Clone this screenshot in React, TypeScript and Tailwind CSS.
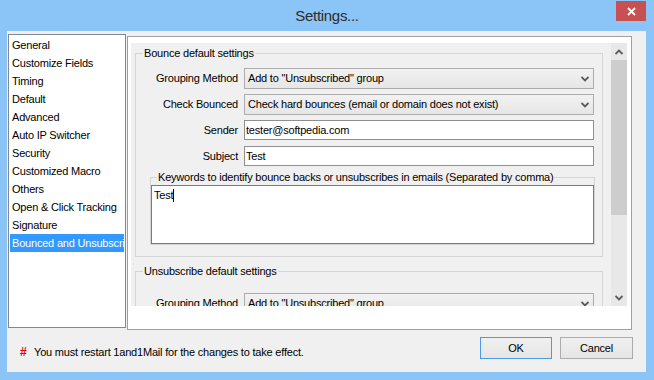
import React from "react";

const items = [
  "General",
  "Customize Fields",
  "Timing",
  "Default",
  "Advanced",
  "Auto IP Switcher",
  "Security",
  "Customized Macro",
  "Others",
  "Open & Click Tracking",
  "Signature",
  "Bounced and Unsubscribe",
];

function Chevron({ up = false }: { up?: boolean }) {
  return (
    <svg width="8" height="6" viewBox="0 0 8 6" className="block">
      <polyline
        points={up ? "0.5,5 4,1.5 7.5,5" : "0.5,1 4,4.5 7.5,1"}
        fill="none"
        stroke="#5a5a5a"
        strokeWidth="1.8"
      />
    </svg>
  );
}

function Select({ text }: { text: string }) {
  return (
    <div className="h-[21px] border border-[#acacac] bg-gradient-to-b from-[#f2f2f2] to-[#e6e6e6] flex items-center justify-between pl-[3px] pr-[4px]">
      <span className="whitespace-nowrap">{text}</span>
      <Chevron />
    </div>
  );
}

function Input({ text }: { text: string }) {
  return (
    <div className="h-[20px] border border-[#8f8f8f] bg-white flex items-center pl-[1px]">
      <span className="whitespace-nowrap">{text}</span>
    </div>
  );
}

function Label({ text }: { text: string }) {
  return <div className="h-[21px] flex items-center justify-end whitespace-nowrap">{text}</div>;
}

export default function App() {
  return (
    <div className="w-[654px] h-[380px] bg-[#8bc4f6] flex flex-col overflow-hidden font-['Liberation_Sans',Arial,sans-serif] text-[11px] leading-[13px] tracking-[-0.2px] text-black">
      {/* title bar */}
      <div className="h-[31px] grid grid-cols-[1fr_auto_1fr] items-start shrink-0">
        <div />
        <div className="pt-[7px] text-[15px] leading-[18px] tracking-[-0.3px] text-[#2d2d2d]">Settings...</div>
        <div className="flex justify-end pr-[8px] pt-[1px]">
          <div className="w-[30px] h-[20px] bg-[#c75050] flex items-center justify-center">
            <svg width="9" height="9" viewBox="0 0 9 9">
              <path d="M1 1 L8 8 M8 1 L1 8" stroke="white" strokeWidth="1.8" />
            </svg>
          </div>
        </div>
      </div>

      {/* client */}
      <div className="flex-1 ml-[7px] mr-[8px] mb-[8px] bg-[#f0f0f0] flex flex-col">
        <div className="flex items-start pt-[3px] pl-[1px] shrink-0">
          {/* list */}
          <div className="w-[118px] h-[294px] border border-[#828790] bg-white p-[1px] flex flex-col">
            {items.map((it) => (
              <div
                key={it}
                className={
                  "h-[18px] leading-[18px] pl-[2px] whitespace-nowrap overflow-hidden " +
                  (it.startsWith("Bounced") ? "bg-[#3399ff] text-white" : "")
                }
              >
                {it}
              </div>
            ))}
          </div>

          {/* right panel */}
          <div className="ml-[1px] mt-[2px] w-[505px] h-[294px] border border-[#a0a0a0] bg-white pt-[6px] pl-[3px] pr-[4px] flex flex-col">
            <div className="h-[263px] flex overflow-hidden bg-[#f0f0f0]">
              {/* content */}
              <div className="w-[480px] pt-[4px] pl-[4px] flex flex-col">
                <fieldset className="w-[468px] border border-[#d5d5d5] pb-[11px]">
                  <legend className="ml-[7px] px-[1px] leading-[13px]">Bounce default settings</legend>
                  <div className="pt-[8px] pr-[8px] grid grid-cols-[102px_1fr] gap-x-[6px] gap-y-[5px]">
                    <Label text="Grouping Method" />
                    <Select text={'Add to "Unsubscribed" group'} />
                    <Label text="Check Bounced" />
                    <Select text="Check hard bounces (email or domain does not exist)" />
                    <Label text="Sender" />
                    <Input text="tester@softpedia.com" />
                    <Label text="Subject" />
                    <Input text="Test" />
                  </div>
                  <fieldset className="mt-[4px] ml-[14px] mr-[7px] border border-[#d5d5d5] px-0 pb-0">
                    <legend className="ml-[6px] px-[1px] leading-[13px] whitespace-nowrap">
                      Keywords to identify bounce backs or unsubscribes in emails (Separated by comma)
                    </legend>
                    <div className="mt-[1px] h-[59px] border border-[#7a7a7a] bg-white pl-[2px] pt-[3px] flex items-start">
                      <span>Test</span>
                      <span className="w-[1px] h-[13px] bg-black" />
                    </div>
                  </fieldset>
                </fieldset>

                <fieldset className="mt-[8px] w-[468px] border border-[#d5d5d5] pb-[11px] shrink-0">
                  <legend className="ml-[7px] px-[1px] leading-[13px]">Unsubscribe default settings</legend>
                  <div className="pt-[15px] pr-[8px] grid grid-cols-[102px_1fr] gap-x-[6px] gap-y-[5px]">
                    <Label text="Grouping Method" />
                    <Select text={'Add to "Unsubscribed" group'} />
                  </div>
                </fieldset>
              </div>

              {/* scrollbar */}
              <div className="w-[16px] bg-[#e8e8e8] flex flex-col shrink-0">
                <div className="h-[17px] flex items-center justify-center">
                  <Chevron up />
                </div>
                <div className="h-[155px] bg-[#cdcdcd]" />
                <div className="flex-1" />
                <div className="h-[17px] flex items-center justify-center">
                  <Chevron />
                </div>
              </div>
            </div>
          </div>
        </div>

        {/* footer */}
        <div className="flex-1 flex justify-between items-start pt-[7px] pl-[13px] pr-[13px]">
          <div className="mt-[9px] flex items-center">
            <span className="text-[#e00000] font-bold text-[12px] leading-[13px] w-[14px]">#</span>
            <span className="whitespace-nowrap">You must restart 1and1Mail for the changes to take effect.</span>
          </div>
          <div className="flex gap-[8px]">
            <div className="w-[72px] h-[22px] border border-[#4f9ae6] bg-gradient-to-b from-[#f0f0f0] to-[#e5e5e5] flex items-center justify-center">
              OK
            </div>
            <div className="w-[73px] h-[22px] border border-[#acacac] bg-gradient-to-b from-[#f0f0f0] to-[#e5e5e5] flex items-center justify-center">
              Cancel
            </div>
          </div>
        </div>
      </div>
    </div>
  );
}
